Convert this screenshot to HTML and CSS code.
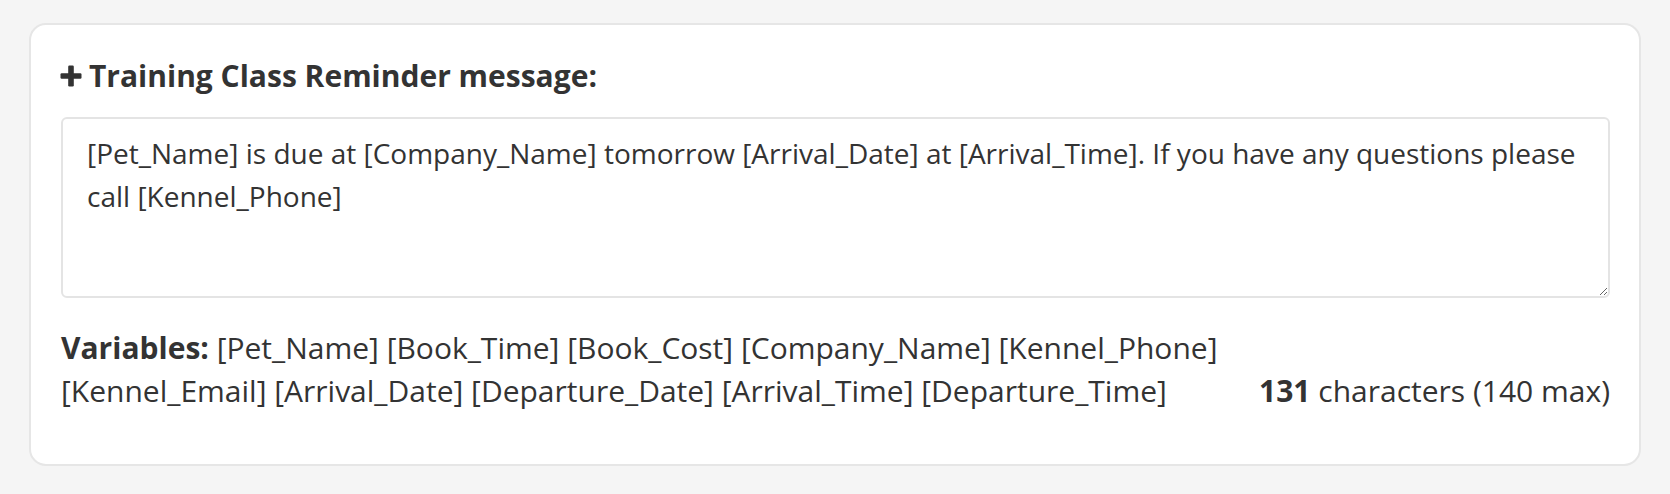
FILE: index.html
```html
<!DOCTYPE html>
<html>
<head>
<meta charset="utf-8">
<link rel="stylesheet" href="styles.css">
</head>
<body>
<div class="card">
  <h2 class="title"><svg class="plus" viewBox="0 0 22 22" width="22" height="22"><rect x="8.2" y="0.5" width="5.6" height="21" rx="1.2" fill="#333"/><rect x="0.5" y="8.2" width="21" height="5.6" rx="1.2" fill="#333"/></svg>Training Class Reminder message:</h2>
  <textarea class="msg">[Pet_Name] is due at [Company_Name] tomorrow [Arrival_Date] at [Arrival_Time]. If you have any questions please call [Kennel_Phone]</textarea>
  <div class="footer">
    <div class="vars"><b>Variables:</b> [Pet_Name] [Book_Time] [Book_Cost] [Company_Name] [Kennel_Phone] [Kennel_Email] [Arrival_Date] [Departure_Date] [Arrival_Time] [Departure_Time]</div>
    <div class="count"><b>131</b> characters (140 max)</div>
  </div>
</div>
</body>
</html>
```
FILE: styles.css
```css
html, body {
  margin: 0;
  padding: 0;
  background: #f5f5f5;
}
body {
  padding: 23px 29px 30px 29px;
  font-family: "Open Sans", "Noto Sans", sans-serif;
  color: #333;
}
.card {
  background: #fff;
  border: 2px solid #e6e6e6;
  border-radius: 17px;
  padding: 34px 29px 52px 30px;
  display: flex;
  flex-direction: column;
}
.title {
  margin: 0 0 24px 0;
  font-size: 30px;
  line-height: 34px;
  font-weight: 700;
  display: flex;
  align-items: center;
  gap: 7px;
}
.plus {
  display: block;
  margin-left: -1px;
}
.msg {
  font-family: "Open Sans", "Noto Sans", sans-serif;
  font-size: 28px;
  line-height: 42.5px;
  color: #333;
  height: 181px;
  box-sizing: border-box;
  padding: 13px 24px;
  border: 2px solid #e4e4e4;
  border-radius: 6px;
  resize: vertical;
  margin: 0;
  width: 100%;
  outline: none;
}
.footer {
  margin-top: 29px;
  display: flex;
  align-items: flex-end;
  justify-content: space-between;
  gap: 12px;
  font-size: 30px;
  line-height: 42.5px;
}
.vars {
  flex: 1 1 0;
}
.count {
  white-space: nowrap;
}
```
